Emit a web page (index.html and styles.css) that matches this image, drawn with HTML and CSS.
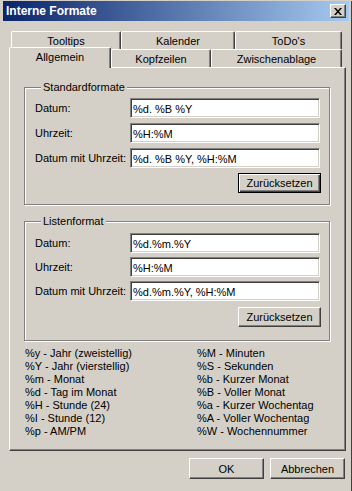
FILE: index.html
```html
<!DOCTYPE html>
<html lang="de">
<head>
  <meta charset="UTF-8" />
  <meta name="viewport" content="width=device-width, initial-scale=1.0"/>
  <title>Interne Formate</title>
  <link rel="stylesheet" href="styles.css">
</head>
<body>
  <div class="window">
    <div class="titlebar">
      <span class="title">Interne Formate</span>
      <button class="close" type="button" aria-label="Schließen">
        <svg width="8" height="7" viewBox="0 0 8 7">
          <path d="M0 0h2l2 2.5L6 0h2L5 3.5 8 7H6L4 4.5 2 7H0l3-3.5z" fill="#000"/>
        </svg>
      </button>
    </div>

    <div class="content">
      <div class="tabs">
        <div class="tabrow back">
          <div class="tab tab-tooltips">Tooltips</div>
          <div class="tab tab-kalender">Kalender</div>
          <div class="tab tab-todo">ToDo's</div>
        </div>
        <div class="tabrow front">
          <div class="tab tab-allgemein active">Allgemein</div>
          <div class="tab tab-kopf">Kopfzeilen</div>
          <div class="tab tab-zwischen">Zwischenablage</div>
        </div>
      </div>

      <div class="panel">
        <fieldset class="group group-standard">
          <legend>Standardformate</legend>
          <div class="field">
            <label>Datum:</label>
            <input class="edit" type="text" value="%d. %B %Y">
          </div>
          <div class="field">
            <label>Uhrzeit:</label>
            <input class="edit" type="text" value="%H:%M">
          </div>
          <div class="field">
            <label>Datum mit Uhrzeit:</label>
            <input class="edit" type="text" value="%d. %B %Y, %H:%M">
          </div>
          <div class="actions">
            <button class="btn btn-reset default" type="button">Zurücksetzen</button>
          </div>
        </fieldset>

        <fieldset class="group group-list">
          <legend>Listenformat</legend>
          <div class="field">
            <label>Datum:</label>
            <input class="edit" type="text" value="%d.%m.%Y">
          </div>
          <div class="field">
            <label>Uhrzeit:</label>
            <input class="edit" type="text" value="%H:%M">
          </div>
          <div class="field">
            <label>Datum mit Uhrzeit:</label>
            <input class="edit" type="text" value="%d.%m.%Y, %H:%M">
          </div>
          <div class="actions">
            <button class="btn btn-reset" type="button">Zurücksetzen</button>
          </div>
        </fieldset>

        <div class="codes">
          <ul>
            <li>%y - Jahr (zweistellig)</li>
            <li>%Y - Jahr (vierstellig)</li>
            <li>%m - Monat</li>
            <li>%d - Tag im Monat</li>
            <li>%H - Stunde (24)</li>
            <li>%I - Stunde (12)</li>
            <li>%p - AM/PM</li>
          </ul>
          <ul>
            <li>%M - Minuten</li>
            <li>%S - Sekunden</li>
            <li>%b - Kurzer Monat</li>
            <li>%B - Voller Monat</li>
            <li>%a - Kurzer Wochentag</li>
            <li>%A - Voller Wochentag</li>
            <li>%W - Wochennummer</li>
          </ul>
        </div>
      </div>

      <div class="dialog-buttons">
        <button class="btn btn-dialog" type="button">OK</button>
        <button class="btn btn-dialog" type="button">Abbrechen</button>
      </div>
    </div>
  </div>
</body>
</html>
```

FILE: styles.css
```css
body {
  margin: 0;
  font-family: 'Liberation Sans', Arial, sans-serif;
  font-size: 11px;
  color: #000;
  background: #d4d0c8;
}

.window {
  box-sizing: border-box;
  width: 352px;
  height: 491px;
  background: #d4d0c8;
  border: 1px solid;
  border-color: #d4d0c8 #404040 #404040 #d4d0c8;
  border-top: none;
}

/* title bar */
.titlebar {
  display: flex;
  align-items: center;
  justify-content: space-between;
  height: 20px;
  margin: 1px 2px 0 2px;
  padding: 0 3px 0 3px;
  background: linear-gradient(90deg, #0a246a, #a6caf0);
}

.title {
  font-size: 12px;
  font-weight: bold;
  color: #fff;
}

.close {
  display: flex;
  align-items: center;
  justify-content: center;
  box-sizing: border-box;
  width: 16px;
  height: 14px;
  padding: 0;
  background: #d4d0c8;
  border: 1px solid;
  border-color: #fff #404040 #404040 #fff;
  box-shadow: inset -1px -1px #808080;
}

.content {
  padding: 10px 5px 0 8px;
}

/* tabs */
.tabs {
  height: 36px;
}

.tabrow {
  display: flex;
  height: 18px;
  padding-left: 2px;
}

.tab {
  box-sizing: border-box;
  height: 18px;
  padding-top: 3px;
  text-align: center;
  background: #d4d0c8;
  border-top: 1px solid #fff;
  border-left: 1px solid #fff;
  border-right: 1px solid #404040;
  border-radius: 2px 2px 0 0;
  box-shadow: inset -1px 0 #808080;
}

.tab-tooltips { width: 110px; }
.tab-kalender { width: 114px; }
.tab-todo { width: 107px; }
.tab-allgemein { width: 100px; }
.tab-kopf { width: 100px; }
.tab-zwischen { width: 131px; }

.tab.active {
  position: relative;
  z-index: 1;
  width: 102px;
  height: 21px;
  margin: -2px 0 0 -2px;
  padding-top: 3px;
}

/* panel */
.panel {
  box-sizing: border-box;
  height: 384px;
  padding: 13px 15px 0 14px;
  border: 1px solid;
  border-color: #fff #404040 #404040 #fff;
  box-shadow: inset -1px -1px #808080;
}

.group {
  margin: 0 0 10px;
  padding: 4px 9px 11px 10px;
  border: 1px solid #808080;
  box-shadow: inset 1px 1px #fff, 1px 1px #fff;
}

.group legend {
  margin-left: 6px;
  padding: 0 2px;
  line-height: 13px;
  background: #d4d0c8;
}

.field {
  display: flex;
  align-items: center;
  margin-bottom: 5px;
}

.field label {
  width: 95px;
  flex: none;
}

.edit {
  box-sizing: border-box;
  flex: 1;
  min-width: 0;
  height: 20px;
  margin: 0;
  padding: 1px 2px 0;
  font: inherit;
  color: #000;
  background: #fff;
  border: 1px solid;
  border-color: #808080 #fff #fff #808080;
  box-shadow: inset 1px 1px #404040, inset -1px -1px #d4d0c8;
  outline: none;
}

.actions {
  display: flex;
  justify-content: flex-end;
  margin-top: 2px;
}

.group-list {
  margin-bottom: 6px;
  padding-top: 5px;
  padding-bottom: 13px;
}

.group-list .field {
  margin-bottom: 4px;
}

.group-list .actions {
  margin-top: 6px;
}

.btn {
  box-sizing: border-box;
  padding: 0;
  font: inherit;
  color: #000;
  background: #d4d0c8;
  border: 1px solid;
  border-color: #fff #404040 #404040 #fff;
  box-shadow: inset -1px -1px #808080;
}

.btn-reset {
  width: 83px;
  height: 20px;
  margin-right: -1px;
}

.btn.default {
  border: 1px solid #000;
  box-shadow: inset 1px 1px #fff, inset -1px -1px #404040, inset -2px -2px #808080;
}

/* format codes */
.codes {
  display: grid;
  grid-template-columns: 172px 1fr;
  padding-left: 1px;
}

.codes ul {
  margin: 0;
  padding: 0;
  list-style: none;
}

.codes li {
  height: 13px;
  line-height: 13px;
}

/* OK / Abbrechen */
.dialog-buttons {
  display: flex;
  justify-content: flex-end;
  gap: 6px;
  margin-top: 7px;
  padding-right: 1px;
}

.btn-dialog {
  width: 75px;
  height: 21px;
}
```
